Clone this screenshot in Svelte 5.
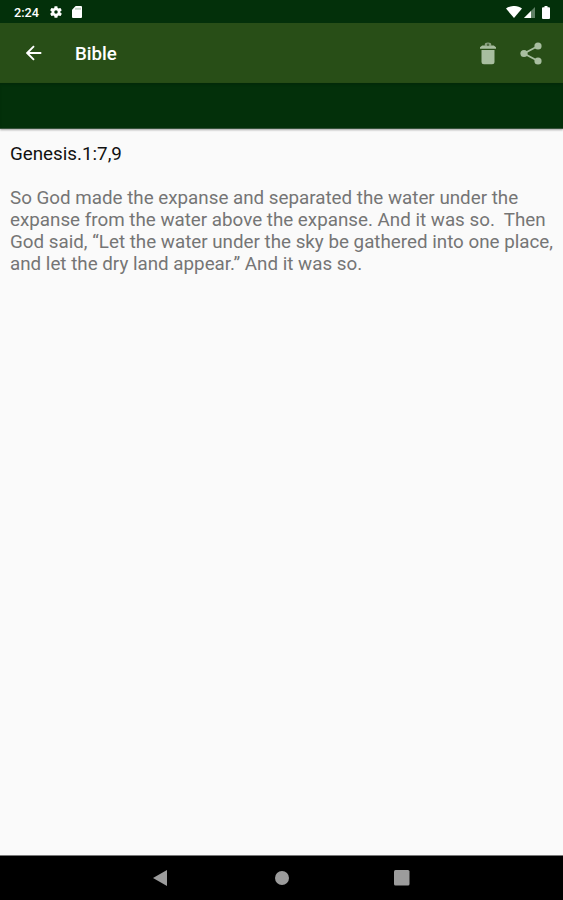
<script>
  const verse = [
    'So God made the expanse and separated the water under the',
    'expanse from the water above the expanse. And it was so.  Then',
    'God said, “Let the water under the sky be gathered into one place,',
    'and let the dry land appear.” And it was so.'
  ].join('\n');
</script>

<div class="screen">
  <div class="status">
    <span class="time">2:24</span>
    <svg class="gear" width="14" height="14" viewBox="0 0 24 24" fill="#fff"><path fill-rule="evenodd" d="M19.4 13a7.500 7.500 0 0 0 0-2l2.100-1.700c.2-.1.3-.4.1-.6l-2-3.500c-.1-.2-.4-.3-.6-.2l-2.500 1c-.5-.4-1.100-.7-1.700-1l-.4-2.600c0-.2-.2-.4-.5-.4h-4c-.2 0-.5.200-.5.400L9 5c-.6.300-1.200.6-1.700 1L4.900 5c-.3-.1-.5 0-.7.200l-2 3.500c-.1.200 0 .5.200.6L4.500 11a8 8 0 0 0 0 2l-2.100 1.700c-.2.100-.3.400-.2.6l2 3.500c.2.200.4.300.7.200l2.400-1c.5.400 1.100.7 1.700 1l.4 2.600c0 .2.300.4.500.4h4c.300 0 .5-.2.500-.4L15 19c.6-.3 1.200-.6 1.700-1l2.400 1c.3.100.5 0 .7-.2l2-3.500c.1-.2 0-.5-.2-.6ZM12 15a3 3 0 1 1 0-6 3 3 0 0 1 0 6Z"/></svg>
    <svg class="card" width="10" height="12" viewBox="0 0 10 12"><path fill="#fff" d="M3.700 0H9a1 1 0 0 1 1 1v10a1 1 0 0 1-1 1H1a1 1 0 0 1-1-1V3.700Z"/><path stroke="#719176" stroke-width=".8" d="M4 1.800v2M6 1.800v2M8 1.800v2"/></svg>
    <div class="signals">
      <svg width="16" height="12" viewBox="0 0 16 12"><path fill="#fff" d="M8 12 0 2.600C4.500-.9 11.500-.9 16 2.600Z"/></svg>
      <svg class="cell" width="11" height="11" viewBox="0 0 11 11"><path fill="#608066" d="M11 0v11H0Z"/><path fill="#fff" d="M7 4v7H0Z"/></svg>
      <svg class="battery" width="8" height="13" viewBox="0 0 8 13"><path fill="#fff" d="M2.500 0h3v1.200H7a1 1 0 0 1 1 1V12a1 1 0 0 1-1 1H1a1 1 0 0 1-1-1V2.200a1 1 0 0 1 1-1h1.500Z"/></svg>
    </div>
  </div>
  <header>
    <svg class="back" width="16" height="16" viewBox="0 0 16 16" fill="none" stroke="#fff" stroke-width="1.900"><path d="M15.300 8H1.300M8 1.200 1.200 8l6.800 6.800"/></svg>
    <h1>Bible</h1>
    <div class="actions">
      <svg width="16" height="23" viewBox="0 0 16 23" fill="#a8bea0"><path d="M1.500 8h13v11.700a2.500 2.500 0 0 1-2.500 2.500H4a2.500 2.500 0 0 1-2.500-2.500Z"/><path d="M0 6.800V5.200L2.200 3.600h11.600L16 5.200v1.600Z"/><path d="M4.700 4.200V2.900Q4.700.5 8 .5t3.300 2.400v1.300" fill="#8ca382"/><circle cx="8" cy="2.700" r="1.200" fill="#4c6840"/></svg>
      <svg class="share" width="22" height="23" viewBox="0 0 22 23" fill="#a8bea0"><path d="M18 4 4 11.500 18 19" fill="none" stroke="#a8bea0" stroke-width="1.800"/><circle cx="18" cy="4" r="3.600"/><circle cx="4" cy="11.500" r="3.600"/><circle cx="18" cy="19" r="3.600"/></svg>
    </div>
  </header>
  <div class="strip"></div>
  <main>
    <h2>Genesis.1:7,9</h2>
    <p>{verse}</p>
  </main>
  <nav>
    <svg width="14" height="16" viewBox="0 0 14 16"><path fill="#9c9c9c" d="M14 0v16L0 8Z"/></svg>
    <svg class="home" width="14" height="14" viewBox="0 0 14 14"><circle cx="7" cy="7" r="7" fill="#9c9c9c"/></svg>
    <svg class="recent" width="16" height="16" viewBox="0 0 16 16"><rect width="15.500" height="15.500" rx="1.500" fill="#9c9c9c"/></svg>
  </nav>
</div>

<style>
  :global(body) { margin: 0; }
  .screen {
    width: 563px;
    height: 900px;
    display: flex;
    flex-direction: column;
    background: #fafafa;
    font-family: Roboto, sans-serif;
    overflow: hidden;
  }
  svg { display: block; flex: none; }
  .status {
    height: 23px;
    flex: none;
    box-sizing: border-box;
    display: flex;
    align-items: center;
    padding: 1px 13px 0 14px;
    background: #03300a;
    color: #fff;
  }
  .time { width: 35px; font-size: 12.700px; font-weight: 500; line-height: 23px; }
  .card { margin-left: 9px; }
  .signals { margin-left: auto; display: flex; align-items: center; }
  .cell { margin-left: 2px; }
  .battery { margin-left: 7px; }
  header {
    height: 60px;
    flex: none;
    box-sizing: border-box;
    display: flex;
    align-items: center;
    padding: 0 21px 0 26px;
    background: #284e17;
  }
  h1 {
    margin: 2px 0 0 33px;
    color: #fff;
    font-size: 18.700px;
    line-height: 24px;
    font-weight: 500;
  }
  .actions { margin-left: auto; display: flex; align-items: center; }
  .share { margin-left: 24px; }
  .strip {
    height: 46px;
    flex: none;
    box-sizing: border-box;
    position: relative;
    background: #03300a;
    border-bottom: 1px solid #35513a;
    box-shadow: 0 1px 2px rgba(0, 0, 0, .35), inset 0 2px 2px rgba(0, 0, 0, .12);
  }
  main { flex: 1; padding: 14px 0 0 10px; }
  h2 { margin: 0; color: #111; font-size: 18.800px; line-height: 22px; font-weight: 400; }
  p { margin: 22px 0 0; color: #757575; font-size: 18.800px; line-height: 22px; white-space: pre; }
  nav {
    height: 45px;
    flex: none;
    box-sizing: border-box;
    display: flex;
    align-items: center;
    padding-left: 153px;
    background: #000;
    border-top: 1px solid #777;
  }
  .home { margin-left: 108px; }
  .recent { margin-left: 105px; }
</style>
